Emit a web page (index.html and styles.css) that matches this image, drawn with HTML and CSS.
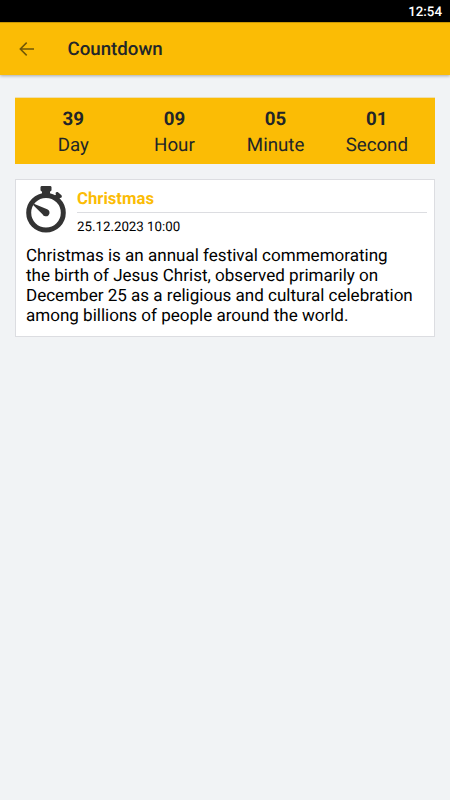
FILE: index.html
```html
<!DOCTYPE html>
<html lang="en">
<head>
<meta charset="utf-8">
<title>Countdown</title>
<link rel="stylesheet" href="styles.css">
</head>
<body>
<div class="status"><span>12:54</span></div>
<header class="appbar">
  <svg class="back" viewBox="0 0 16 14"><path d="M15 7H1.5M7.7 .6L1.3 7l6.4 6.4"/></svg>
  <h1>Countdown</h1>
</header>
<main>
  <section class="timer">
    <div class="unit"><b>39</b><span>Day</span></div>
    <div class="unit"><b>09</b><span>Hour</span></div>
    <div class="unit"><b>05</b><span>Minute</span></div>
    <div class="unit"><b>01</b><span>Second</span></div>
  </section>
  <article class="card">
    <div class="top">
      <svg class="watch" viewBox="0 0 40 47">
        <rect x="14.5" y="0" width="11" height="5.5" rx="1.4"/>
        <rect x="16" y="4" width="8" height="6"/>
        <path d="M27.5 10.5l2.500-2-.5-1.500q.8-1.400 2.200-1l3.800 3.300q.9 1.300-.2 2.400l-1.500.3-1.800 2.500z"/>
        <circle class="ring" cx="20" cy="26.8" r="17.3"/>
        <path d="M7.200 18.400q.3-.7 1.200-.5l12.800 5.300a3.700 3.700 0 1 1-4.700 5L7.600 19.500q-.6-.5-.4-1.100z"/>
      </svg>
      <div class="meta">
        <h2>Christmas</h2>
        <time>25.12.2023 10:00</time>
      </div>
    </div>
    <p>Christmas is an annual festival commemorating<br>the birth of Jesus Christ, observed primarily on<br>December 25 as a religious and cultural celebration<br>among billions of people around the world.</p>
  </article>
</main>
</body>
</html>
```
FILE: styles.css
```css
* { box-sizing: border-box; }
body {
  margin: 0;
  min-height: 800px;
  background: #f1f3f5;
  color: #000;
  font-family: Roboto, sans-serif;
  text-rendering: geometricPrecision;
}
h1, h2, p { margin: 0; }
.status {
  height: 22px;
  padding-right: 8px;
  background: #000;
  color: #fff;
  font-size: 13.3px;
  font-weight: 500;
  line-height: 26px;
  text-align: right;
}
.appbar {
  display: flex;
  align-items: center;
  height: 53px;
  padding: 0 0 1px 18.5px;
  background: #fbbc05;
  border-top: 1px solid #c99704;
  box-shadow: 0 1px 3px rgba(0, 0, 0, .3);
}
.back {
  width: 16px;
  height: 14px;
  fill: none;
  stroke: #705707;
  stroke-width: 1.5;
}
h1 {
  margin-left: 33px;
  color: #212529;
  font-size: 18.7px;
  font-weight: 500;
  line-height: 24px;
}
main { padding: 22px 15px 0; }
.timer {
  display: grid;
  grid-template-columns: repeat(4, 101.2px);
  justify-content: center;
  height: 67px;
  padding-top: 8px;
  background: #fbbc05;
  border-top: 1px solid #eedfb0;
  color: #212529;
  font-size: 18.7px;
  line-height: 26px;
}
.unit {
  display: flex;
  flex-direction: column;
  align-items: center;
}
.card {
  height: 158px;
  margin-top: 15px;
  padding: 6px 7px 0 10px;
  background: #fff;
  border: 1px solid #dcdde1;
}
.top { display: flex; }
.watch {
  width: 40px;
  height: 47px;
  fill: #333;
}
.ring {
  fill: none;
  stroke: #333;
  stroke-width: 5;
}
.meta {
  flex: 1;
  margin-left: 11px;
}
h2 {
  height: 27px;
  border-bottom: 1px solid #dcdde1;
  color: #fbbc05;
  font-size: 16.7px;
  line-height: 27px;
}
time {
  display: block;
  font-size: 13.3px;
  line-height: 30px;
}
p {
  margin-top: 3px;
  font-size: 17.05px;
  line-height: 20px;
  white-space: nowrap;
}
```
